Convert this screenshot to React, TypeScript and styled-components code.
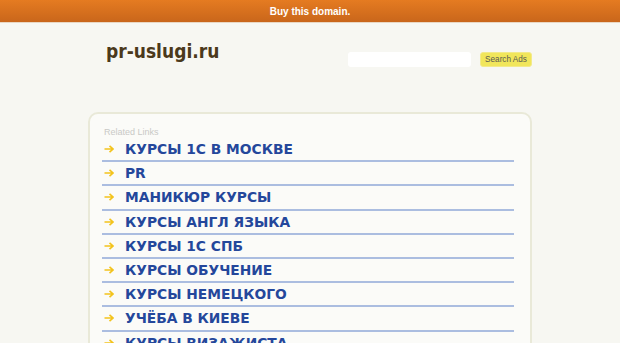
import React from "react";
import styled, { createGlobalStyle } from "styled-components";

const Global = createGlobalStyle`
  html, body { margin: 0; padding: 0; background: #f7f7f2; }
  body { font-family: "Liberation Sans", Arial, sans-serif; overflow: hidden; }
`;

const TopBar = styled.div`
  height: 22px;
  background: linear-gradient(#e57b21, #c9661b);
  border-bottom: 1px solid #e9d7c3;
  display: flex;
  align-items: center;
  justify-content: center;
  color: #fff;
  font: bold 10px "Liberation Sans", Arial, sans-serif;
`;

const Wrap = styled.div`
  width: 444px;
  margin: 0 auto;
`;

const HeadRow = styled.div`
  display: flex;
  align-items: flex-start;
  justify-content: space-between;
  height: 89px;
  padding-top: 17px;
  box-sizing: border-box;
`;

const Title = styled.h1`
  margin: 0 0 0 18px;
  font-family: "DejaVu Sans", sans-serif;
  font-weight: bold;
  font-size: 19px;
  font-stretch: 87.5%;
  color: #4b391b;
  line-height: 22px;
  white-space: nowrap;
`;

const SearchForm = styled.div`
  display: flex;
  gap: 9px;
  margin-top: 12px;
`;

const SearchInput = styled.div`
  width: 123px;
  height: 15px;
  background: #fff;
  border-radius: 3px;
`;

const SearchButton = styled.div`
  width: 52px;
  height: 15px;
  background: #f1e65b;
  border: 1px solid #f3ea8a;
  box-sizing: border-box;
  border-radius: 3px;
  display: flex;
  align-items: center;
  justify-content: center;
  font: 8.2px "Liberation Sans", Arial, sans-serif;
  color: #5a5a50;
`;

const Panel = styled.div`
  background: #fbfbf8;
  border: 2px solid #e9e9d8;
  border-radius: 10px;
  padding: 12px 16px 0 12px;
  min-height: 240px;
`;

const Label = styled.div`
  font: 9px "Liberation Sans", Arial, sans-serif;
  color: #c9c9c6;
  padding-left: 2px;
  height: 12px;
  line-height: 12px;
`;

const Row = styled.div`
  height: 22.2px;
  border-bottom: 2px solid #abbde0;
  display: flex;
  align-items: center;
  padding-left: 2px;
  gap: 11px;
`;

const LinkText = styled.span`
  font: bold 13.8px "DejaVu Sans", sans-serif;
  color: #24479b;
  white-space: nowrap;
`;

const Arrow = () => (
  <svg width="10" height="8" viewBox="0 0 10 8">
    <path d="M0.5 4 H9 M5.5 0.8 L9 4 L5.5 7.2" stroke="#f3c31c" strokeWidth="1.6" fill="none" />
  </svg>
);

const links = [
  "КУРСЫ 1С В МОСКВЕ",
  "PR",
  "МАНИКЮР КУРСЫ",
  "КУРСЫ АНГЛ ЯЗЫКА",
  "КУРСЫ 1С СПБ",
  "КУРСЫ ОБУЧЕНИЕ",
  "КУРСЫ НЕМЕЦКОГО",
  "УЧЁБА В КИЕВЕ",
  "КУРСЫ ВИЗАЖИСТА",
];

export default function App() {
  return (
    <>
      <Global />
      <TopBar>Buy this domain.</TopBar>
      <Wrap>
        <HeadRow>
          <Title>pr-uslugi.ru</Title>
          <SearchForm>
            <SearchInput />
            <SearchButton>Search Ads</SearchButton>
          </SearchForm>
        </HeadRow>
        <Panel>
          <Label>Related Links</Label>
          {links.map((l) => (
            <Row key={l}>
              <Arrow />
              <LinkText>{l}</LinkText>
            </Row>
          ))}
        </Panel>
      </Wrap>
    </>
  );
}
